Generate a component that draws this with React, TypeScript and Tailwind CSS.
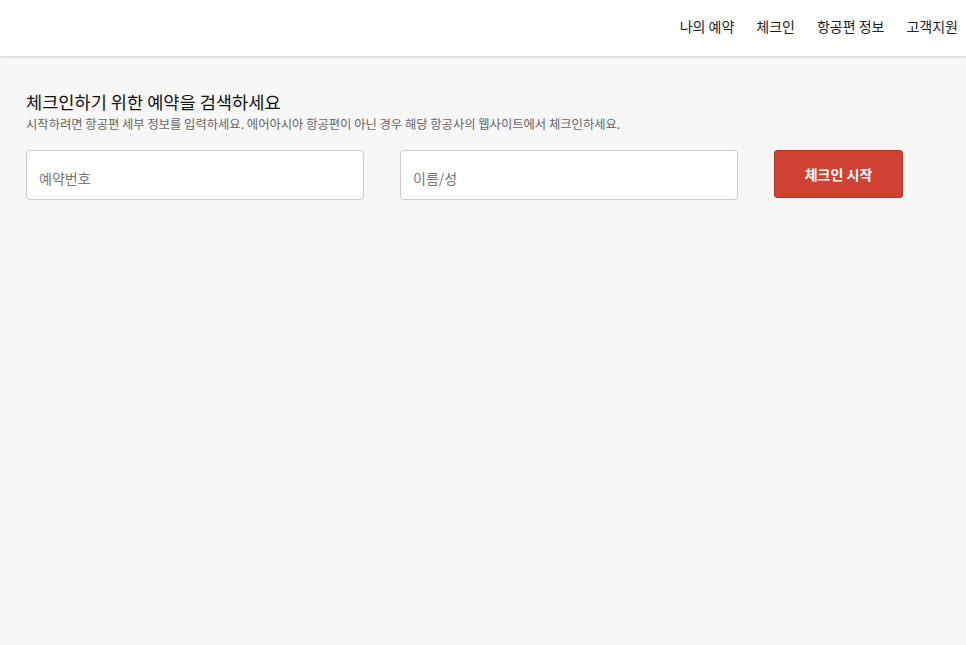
import React from "react";

const navItems = ["나의 예약", "체크인", "항공편 정보", "고객지원"];

export default function App() {
  return (
    <div
      className="min-h-[645px] bg-[#f7f7f7] text-[#222]"
      style={{ fontFamily: '"Noto Sans CJK KR", "Noto Sans", sans-serif' }}
    >
      <header className="h-[56px] bg-white shadow-[0_1px_3px_rgba(0,0,0,0.18)] flex items-center justify-end pr-[8px]">
        <nav className="flex gap-[22px] text-[14px] text-[#222] mt-[-4px]">
          {navItems.map((item) => (
            <a key={item} href="#" className="whitespace-nowrap">
              {item}
            </a>
          ))}
        </nav>
      </header>

      <main className="px-[26px] pt-[34px]">
        <h1 className="text-[17.6px] leading-[24px] font-normal text-[#111]">
          체크인하기 위한 예약을 검색하세요
        </h1>
        <p className="text-[12.3px] leading-[20px] text-[#666]">
          시작하려면 항공편 세부 정보를 입력하세요. 에어아시아 항공편이 아닌 경우 해당 항공사의 웹사이트에서 체크인하세요.
        </p>

        <div className="flex items-start mt-[16px]">
          <input
            type="text"
            placeholder="예약번호"
            className="w-[338px] h-[50px] bg-white border border-[#ccc] rounded-[4px] px-[12px] pt-[6px] text-[14px] placeholder:text-[#777] outline-none"
          />
          <input
            type="text"
            placeholder="이름/성"
            className="ml-[36px] w-[338px] h-[50px] bg-white border border-[#ccc] rounded-[4px] px-[12px] pt-[6px] text-[14px] placeholder:text-[#777] outline-none"
          />
          <button className="ml-[36px] w-[129px] h-[48px] bg-[#cf4132] border border-[#b8362a] rounded-[3px] text-white text-[14px] font-bold">
            체크인 시작
          </button>
        </div>
      </main>
    </div>
  );
}
